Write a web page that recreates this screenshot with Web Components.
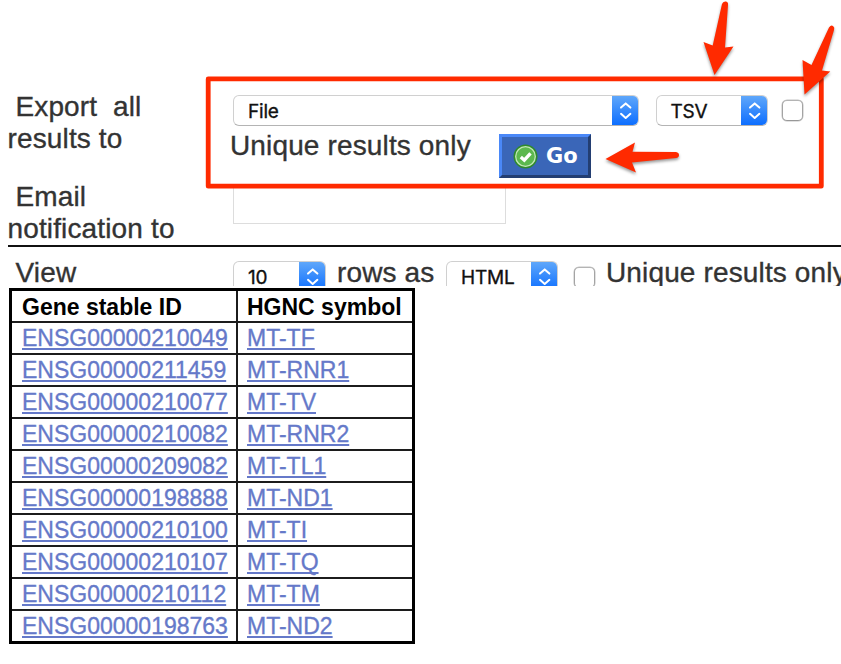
<!DOCTYPE html>
<html lang="en">
<head>
<meta charset="utf-8">
<title>Export results</title>
<style>
html,body{margin:0;padding:0;background:#fff}
body{width:841px;height:664px;overflow:hidden;font-family:"Liberation Sans",Arial,sans-serif;color:#333;-webkit-text-stroke:.35px}
</style>
</head>
<body>
<results-page></results-page>
<script>
class BaseElement extends HTMLElement {
  connectedCallback() {
    if (!this.shadowRoot) this.attachShadow({mode: 'open'}).innerHTML = this.render();
  }
}

customElements.define('mac-select', class extends BaseElement {
  render() {
    return `<style>
      :host{display:flex;box-sizing:border-box;height:31px;flex:none;border-radius:6px;overflow:hidden;
        border:1px solid #d0d0d0;border-bottom-color:#b4b4b4;background:#fff;
        font:19px/30px Inter,Roboto,sans-serif;letter-spacing:-.2px;color:#111;position:relative}
      .label{flex:1;padding:1px 0 0 14px;white-space:nowrap;line-height:29px}
      .cap{width:27px;margin:-1px;height:31px;background:linear-gradient(#62a9fa,#0a6cff);display:block}
    </style>
    <span class="label"><slot></slot></span>
    <svg class="cap" viewBox="0 0 27 31" fill="none" stroke="#fff" stroke-width="2" stroke-linecap="round" stroke-linejoin="round">
      <path d="M9 12.6 13.7 8.4 18.4 12.6M9 18.8 13.7 23 18.4 18.8"/></svg>`;
  }
});

customElements.define('check-box', class extends BaseElement {
  render() {
    return `<style>:host{display:block;flex:none;box-sizing:border-box;width:21px;height:21px;
      border:1.5px solid;border-color:#b4b4b4 #a4a4a4 #989898;border-radius:5px;background:#fff;
      box-shadow:0 0 0 .5px #c4c4c4}</style>`;
  }
});

customElements.define('go-button', class extends BaseElement {
  render() {
    return `<style>
      :host{display:flex;box-sizing:border-box;width:92px;height:44px;flex:none;align-items:center;
        border:3.5px solid;border-color:#4a88f8 #233e72 #233e72 #4a88f8;background:#3a66b8;
        color:#fff;font:bold 21px/36px "DejaVu Sans",sans-serif;letter-spacing:0;-webkit-text-stroke:0;padding-left:11px;gap:8px}
      svg{display:block;flex:none}
    </style>
    <svg width="25" height="25" viewBox="0 0 25 25"><circle cx="12.5" cy="12.5" r="12" fill="#2f8a2c"/>
      <circle cx="12.5" cy="12.5" r="9.8" fill="#5cb84e" stroke="#c3e8b6" stroke-width="1.3"/>
      <path d="M7.8 13 11.3 16.2 17.5 9.3" fill="none" stroke="#fff" stroke-width="3.3"/></svg>
    <slot></slot>`;
  }
});

customElements.define('export-form', class extends BaseElement {
  render() {
    return `<style>
      :host{display:grid;box-sizing:border-box;height:247px;padding:90px 0 0 0;margin-left:7.5px;
        grid-template:90.5px 65px / 225.5px 1fr;border-bottom:2px solid #111;font-size:28px;line-height:32px;letter-spacing:.14px}
      .label{white-space:pre;padding-top:.5px}
      .controls{display:flex;padding-top:5px;height:31px;width:600px}
      mac-select.file{width:406px}
      mac-select.tsv{width:112px;margin-left:16.5px}
      check-box{margin:5px 0 0 14px}
      .second{display:flex;margin-left:-3px;white-space:nowrap}
      .second span{margin-top:4px;width:269px}
      .second go-button{margin-top:8px}
      .email{box-sizing:border-box;width:273px;height:40px;margin-top:3px;border:1px solid #ddd}
    </style>
    <div class="label"> Export  all
results to</div>
    <div><div class="controls"><mac-select class="file">File</mac-select>
      <mac-select class="tsv">TSV</mac-select><check-box></check-box></div>
      <div class="second"><span>Unique results only</span><go-button>Go</go-button></div></div>
    <div class="label"> Email
notification to</div>
    <div><div class="email"></div></div>`;
  }
});

customElements.define('view-bar', class extends BaseElement {
  render() {
    return `<style>
      :host{display:flex;align-items:flex-start;box-sizing:border-box;height:39.4px;overflow:hidden;padding:10px 0 0 15.5px;
        font-size:28px;line-height:32px;white-space:nowrap;letter-spacing:.14px}
      .view{width:217.5px;flex:none}
      mac-select{margin-top:4px;width:92.5px}
      .rows{margin-left:11.5px;width:109px;flex:none}
      mac-select.format{width:111.5px}
      check-box{margin:10px 11px 0 16.5px}
    </style>
    <span class="view">View</span><mac-select>10</mac-select><span class="rows">rows as</span>
    <mac-select class="format">HTML</mac-select><check-box></check-box><span>Unique results only</span>`;
  }
});

customElements.define('gene-row', class extends BaseElement {
  render() {
    return `<style>
      :host{display:grid;grid-template-columns:224px 1fr;box-sizing:border-box;height:32px;
        border-top:2px solid #1c1c1c;font-size:23px;line-height:31px;color:#6579c9;white-space:nowrap}
      :host([head]){height:30px;border-top:0;color:#000;font-weight:bold;line-height:33px;-webkit-text-stroke:0}
      div{padding-left:10px;height:30px}
      div+div{border-left:2px solid #1c1c1c;padding-left:9px}
      :host(:not([head])) span{text-decoration:underline;text-decoration-thickness:1.5px;text-underline-offset:2px;text-decoration-skip-ink:none}
    </style>
    <div><span><slot name="id"></slot></span></div><div><span><slot name="symbol"></slot></span></div>`;
  }
});

customElements.define('gene-table', class extends BaseElement {
  render() {
    const rows = [['ENSG00000210049','MT-TF'],['ENSG00000211459','MT-RNR1'],['ENSG00000210077','MT-TV'],
      ['ENSG00000210082','MT-RNR2'],['ENSG00000209082','MT-TL1'],['ENSG00000198888','MT-ND1'],
      ['ENSG00000210100','MT-TI'],['ENSG00000210107','MT-TQ'],['ENSG00000210112','MT-TM'],['ENSG00000198763','MT-ND2']];
    const row = (r, attr = '') => `<gene-row ${attr}><span slot="id">${r[0]}</span><span slot="symbol">${r[1]}</span></gene-row>`;
    return `<style>:host{display:block;box-sizing:border-box;width:406px;height:356px;margin:1.6px 0 0 9px;border:3px solid #000}</style>
      ${row(['Gene stable ID','HGNC symbol'], 'head')}${rows.map(r => row(r)).join('')}`;
  }
});

customElements.define('callout-layer', class extends BaseElement {
  render() {
    return `<style>:host{position:absolute;inset:0;pointer-events:none}
      svg{display:block} .s{filter:drop-shadow(0 2px 1.5px rgba(0,0,0,.4))}</style>
    <svg width="841" height="664" viewBox="0 0 841 664" fill="#ff2a00">
      <path d="M208.2 78.9 821.3 78.9 821.3 186.2 208.2 186.2Z" fill="none" stroke="#ff2a00" stroke-width="4.8" stroke-linejoin="round"/>
      <g class="s">
      <path d="M714.5 75 703.5 42 712.7 45.5 722 4Q723 1 726 1.5 728.5 2 728 5L725 47.5 733.5 46.5Z"/>
      <path d="M804.5 94.5 802.5 60 811.5 65 829 27.5Q831 24.7 833 26 835 27.5 834 30L822 70.5 830.3 71.5Z"/>
      <path d="M605.5 159 635 142.5 632.5 151.8 676 152Q679 152.5 679 155 679 157.5 676 158L632 162.5 636 172.5Z"/>
      </g>
    </svg>`;
  }
});

customElements.define('results-page', class extends BaseElement {
  render() {
    return `<style>:host{display:block;position:relative;width:841px;height:664px;overflow:hidden}</style>
      <export-form></export-form><view-bar></view-bar><gene-table></gene-table><callout-layer></callout-layer>`;
  }
});
</script>
</body>
</html>
